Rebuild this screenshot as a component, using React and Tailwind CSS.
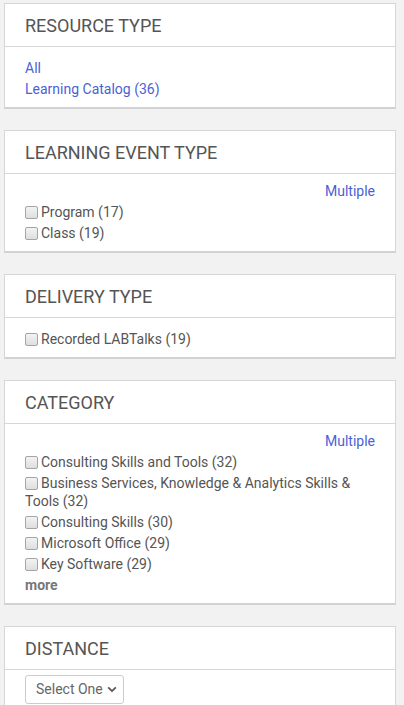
import React from 'react';

const linkCls = 'text-[#4b5fd6]';

const Check = () => (
  <span className="inline-block w-[13px] h-[13px] align-[-2px] mr-[3px] rounded-[2px] border border-[#a5a5a5] bg-gradient-to-b from-[#f3f3f3] to-[#dedede]" />
);

const Card = ({ title, children, bodyClass = 'pt-[13px] pb-[8.5px]' }) => (
  <div className="bg-white border border-[#d6d6d6] border-b-2 border-b-[#d2d2d2]">
    <div className="h-[43px] flex items-center px-[20px] border-b border-[#d6d6d6] text-[18px] text-[#555] uppercase">
      {title}
    </div>
    <div className={`px-[20px] ${bodyClass}`}>{children}</div>
  </div>
);

const CheckList = ({ items, more }) => (
  <div className="flex flex-col gap-[3.5px]">
    {items.map((item) => (
      <div key={item} className="leading-[17.5px]">
        <Check />
        {item}
      </div>
    ))}
    {more && <div className="leading-[17.5px] font-bold text-[#777]">more</div>}
  </div>
);

const Multiple = () => (
  <div className={`-mt-[4px] mb-[3.5px] text-right leading-[17.5px] ${linkCls}`}>Multiple</div>
);

export default function App() {
  return (
    <div
      className="min-h-screen bg-[#f2f2f2] pt-[3px] pl-[4px] pr-[8px] flex flex-col gap-[21px] text-[14px] text-[#555]"
      style={{ fontFamily: 'Roboto, "Liberation Sans", sans-serif' }}
    >
      <Card title="Resource Type">
        <div className="flex flex-col gap-[3.5px]">
          <a className={`leading-[17.5px] ${linkCls}`}>All</a>
          <a className={`leading-[17.5px] ${linkCls}`}>Learning Catalog (36)</a>
        </div>
      </Card>

      <Card title="Learning Event Type">
        <Multiple />
        <CheckList items={['Program (17)', 'Class (19)']} />
      </Card>

      <Card title="Delivery Type">
        <CheckList items={['Recorded LABTalks (19)']} />
      </Card>

      <Card title="Category" bodyClass="pt-[13px] pb-[9px]">
        <Multiple />
        <CheckList
          items={[
            'Consulting Skills and Tools (32)',
            'Business Services, Knowledge & Analytics Skills & Tools (32)',
            'Consulting Skills (30)',
            'Microsoft Office (29)',
            'Key Software (29)',
          ]}
          more
        />
      </Card>

      <Card title="Distance" bodyClass="pt-[5px] pb-[10px]">
        <div className="w-[99px] h-[29px] border border-[#cccccc] rounded-[3px] flex items-center pl-[10px] pr-[6px] text-[#666]">
          <span className="flex-1">Select One</span>
          <svg width="10" height="7" viewBox="0 0 10 7" fill="none">
            <path d="M1.2 1.3 5 5.1 8.8 1.3" stroke="#555" strokeWidth="1.8" />
          </svg>
        </div>
      </Card>
    </div>
  );
}
